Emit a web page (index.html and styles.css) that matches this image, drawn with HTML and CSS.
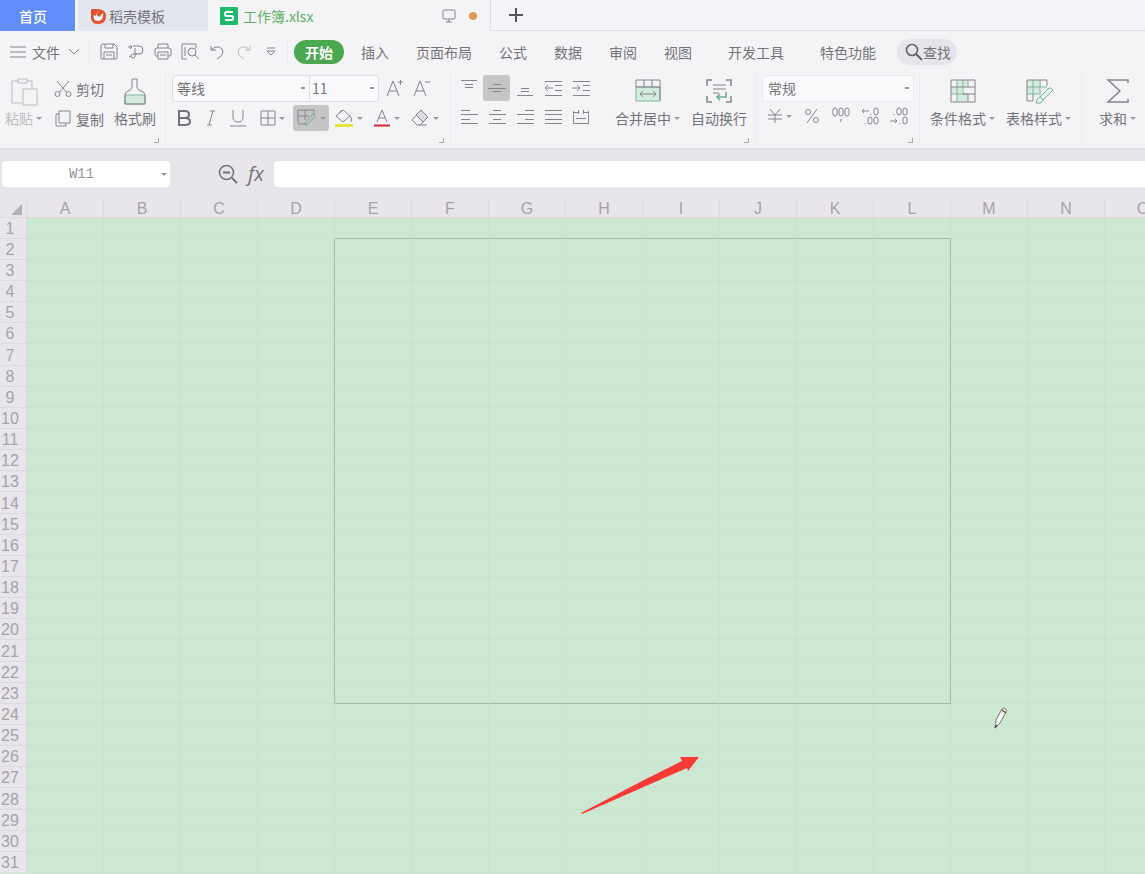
FILE: index.html
```html
<!DOCTYPE html>
<html lang="zh-CN">
<head>
<meta charset="utf-8">
<title>工作簿.xlsx</title>
<link rel="stylesheet" href="styles.css">
</head>
<body>
<nav class="tabs" aria-label="文档">
  <button class="tab tab-home">首页</button>
  <button class="tab tab-store">
    <svg width="16" height="18" viewBox="0 0 16 18"><path d="M1 2h6c6 0 9 3 9 7 0 5-3 8-8 8-5 0-7-3-7-7z" fill="#e5502e"/><path d="M8 3c1 2-1 3-1 5l2 2c2-1 2-3 4-4 1 4-1 8-5 8-4 0-5-3-4-6l2 1c0-2 2-3 2-6z" fill="#fff"/></svg>
    稻壳模板
  </button>
  <button class="tab tab-file">
    <svg width="18" height="18" viewBox="0 0 18 18"><rect width="18" height="18" rx="1" fill="#1cb96f"/><path d="M13 5H6.500Q5 5 5 7t1.500 2h5Q13 9 13 11t-1.500 2H5" fill="none" stroke="#fff" stroke-width="2"/></svg>
    <span class="file-name">工作簿.xlsx</span>
    <svg class="ic" width="14" height="14" viewBox="0 0 14 14"><rect x="1" y="1" width="12" height="9" rx="1"/><path d="M7 10v3M4 13h6"/></svg>
    <span class="dot"></span>
  </button>
  <div class="tab-rest"><button class="tab-add" aria-label="新建"><svg width="14" height="14" viewBox="0 0 14 14"><path d="M7 0v14M0 7h14" stroke="#56565a" stroke-width="2"/></svg></button></div>
</nav>

<div class="menu">
  <button class="file-menu"><svg class="ic" width="16" height="12" viewBox="0 0 16 12"><path d="M0 1h16M0 6h16M0 11h16"/></svg>文件<svg class="ic chev" width="12" height="8" viewBox="0 0 12 8"><path d="M1 1l5 5 5-5"/></svg></button>
  <div class="quick">
    <button aria-label="保存"><svg class="ic" width="18" height="18" viewBox="0 0 18 18"><path d="M1 3q0-2 2-2h11l3 3v11q0 1-1 1H2q-1 0-1-1zM4 16V9h10v7M5 1v4h8V1M6 12h6"/></svg></button>
    <button aria-label="输出"><svg class="ic" width="18" height="18" viewBox="0 0 18 18"><path d="M1 4h4M3 2l2 2-2 2M6 3h6a4 4 0 0 1 0 8H8M8 5v8a2 2 0 1 1-2-2h4M4 13l-2 1"/></svg></button>
    <button aria-label="打印"><svg class="ic" width="18" height="18" viewBox="0 0 18 18"><path d="M4 5V1h10v4M4 13H2q-1 0-1-1V7q0-2 2-2h12q2 0 2 2v5q0 1-1 1h-2M4 9h10v7H4zM6 12h6"/></svg></button>
    <button aria-label="打印预览"><svg class="ic" width="18" height="18" viewBox="0 0 18 18"><path d="M6 16H1V1h14v4M4 4v9"/><circle cx="11" cy="9" r="4"/><path d="M14 12l4 4"/></svg></button>
    <button aria-label="撤销"><svg class="ic" width="16" height="16" viewBox="0 0 16 16"><path d="M2 2v4h5M2 6q4-4 8-3 4 1 4 5 0 4-6 7"/></svg></button>
    <button aria-label="恢复"><svg class="ic pale" width="16" height="16" viewBox="0 0 16 16"><path d="M14 2v4H9M14 6q-4-4-8-3-4 1-4 5 0 4 6 7"/></svg></button>
    <button aria-label="更多"><svg class="ic" width="10" height="10" viewBox="0 0 10 10"><path d="M1 1h8M1 4h8L5 8z"/></svg></button>
  </div>
  <div class="menu-tabs">
    <button class="on">开始</button>
    <button>插入</button><button>页面布局</button><button>公式</button><button>数据</button><button>审阅</button><button>视图</button>
    <button class="wide">开发工具</button><button class="wide">特色功能</button>
  </div>
  <button class="find"><svg width="18" height="18" viewBox="0 0 18 18"><g fill="none" stroke="#626266" stroke-width="1.600"><circle cx="7" cy="7" r="5.500"/><path d="M11 11l6 6" stroke-width="2"/></g></svg>查找</button>
</div>

<div class="ribbon">
  <section class="group clip">
    <button class="big pale-text"><svg class="ic pale" width="28" height="30" viewBox="0 0 28 30"><path d="M8 4H2v22h10M17 4h5v7M8 2h9v4H8z"/><rect x="13" y="12" width="14" height="16"/></svg><span>粘贴<i class="caret"></i></span></button>
    <div class="stack">
      <button><svg class="ic" width="18" height="18" viewBox="0 0 18 18"><path d="M3 1l10 12M15 1L5 13"/><circle cx="3.500" cy="14" r="2.500"/><circle cx="14.500" cy="14" r="2.500"/></svg>剪切</button>
      <button><svg class="ic" width="18" height="18" viewBox="0 0 18 18"><path d="M5 1h11v12H5zM5 4H2v12h10v-3"/></svg>复制</button>
    </div>
    <button class="big"><svg class="ic" width="24" height="30" viewBox="0 0 24 30"><path d="M2 18h20v9H2z" fill="#d5ebdf" stroke="#82b59d"/><path d="M2 27v-9q0-3 3-4 4-1 4-4V2h5v8q0 3 4 4 4 1 4 4v9z"/></svg><span>格式刷</span></button>
    <i class="corner"></i>
  </section>

  <section class="group font">
    <div class="line combo">
      <select class="face" aria-label="字体"><option>等线</option></select><select class="size" aria-label="字号"><option>11</option></select>
      <button class="tool" aria-label="增大字号"><svg class="ic" width="18" height="18" viewBox="0 0 18 18"><path d="M1 17L7 2l6 15M3 12h8M12 3h5M14.500 1v5"/></svg></button>
      <button class="tool" aria-label="减小字号"><svg class="ic" width="18" height="18" viewBox="0 0 18 18"><path d="M1 17L7 2l6 15M3 12h8M12 3h5"/></svg></button>
    </div>
    <div class="line">
      <button class="tool" aria-label="加粗"><svg class="ic dark" width="14" height="16" viewBox="0 0 14 16"><path stroke-width="2" d="M2 1h6q4 0 4 3.500T8 8H2zM2 8h6q5 0 5 3.500T8 15H2z"/></svg></button>
      <button class="tool" aria-label="倾斜"><svg class="ic" width="12" height="16" viewBox="0 0 12 16"><path d="M5 1h5M2 15h5M8 1L4 15"/></svg></button>
      <button class="tool" aria-label="下划线"><svg class="ic" width="16" height="18" viewBox="0 0 16 18"><path d="M3 1v7q0 5 5 5t5-5V1M0 17h16"/></svg></button>
      <button class="tool drop border" aria-label="边框"><svg class="ic" width="16" height="16" viewBox="0 0 16 16"><path d="M1 1h14v14H1zM8 1v14M1 8h14"/></svg><i class="caret"></i></button>
      <button class="tool drop pressed" aria-label="绘图边框"><svg class="ic" width="20" height="18" viewBox="0 0 20 18"><path d="M9 15H3q-2 0-2-2V1h16v5M1 7h11M8 1v10"/><path d="M18 7l-7 8-3 1 1-3 7-8z" stroke="#76a98a"/></svg><i class="caret"></i></button>
      <button class="tool drop" aria-label="填充颜色"><svg class="ic" width="20" height="18" viewBox="0 0 20 18"><path d="M9 1l7 6-7 6-7-6zM5 4l3-3M16 7q3 3 1 6"/><path d="M1 16.500h18" stroke="#e4e43a" stroke-width="3"/></svg><i class="caret"></i></button>
      <button class="tool drop" aria-label="字体颜色"><svg class="ic" width="18" height="18" viewBox="0 0 18 18"><path d="M4 13L9 1l5 12M6 9h6"/><path d="M1 16.500h16" stroke="#d3283f" stroke-width="2"/></svg><i class="caret"></i></button>
      <button class="tool drop" aria-label="清除"><svg class="ic" width="20" height="18" viewBox="0 0 20 18"><path d="M11 1l7 7-8 8H7l-5-5z"/><path d="M11 1l7 7-5 5-7-7z" fill="#dcdcdf"/><path d="M9 16h8"/></svg><i class="caret"></i></button>
    </div>
    <i class="corner"></i>
  </section>

  <section class="group align">
    <div>
      <div class="line">
        <button class="tool" aria-label="顶端对齐"><svg class="ic" width="16" height="16" viewBox="0 0 16 16"><path d="M0 .5h16M4 4.500h8M4 7.500h8"/></svg></button>
        <button class="tool pressed" aria-label="垂直居中"><svg class="ic" width="18" height="16" viewBox="0 0 18 16"><path d="M5 4.500h8M0 8.500h18M5 11.500h8"/></svg></button>
        <button class="tool" aria-label="底端对齐"><svg class="ic" width="16" height="16" viewBox="0 0 16 16"><path d="M4 8.500h8M4 11.500h8M0 15.500h16"/></svg></button>
        <button class="tool" aria-label="减少缩进"><svg class="ic" width="18" height="16" viewBox="0 0 18 16"><path d="M1 1.500h17M11 5.500h7M11 10.500h7M1 15.500h17M9 8H1M4 5L1 8l3 3"/></svg></button>
        <button class="tool" aria-label="增加缩进"><svg class="ic" width="18" height="16" viewBox="0 0 18 16"><path d="M1 1.500h17M11 5.500h7M11 10.500h7M1 15.500h17M0 8h8M5 5l3 3-3 3"/></svg></button>
      </div>
      <div class="line">
        <button class="tool" aria-label="左对齐"><svg class="ic" width="18" height="16" viewBox="0 0 18 16"><path d="M1 1.500h9M1 5.500h17M1 10.500h9M1 14.500h17"/></svg></button>
        <button class="tool" aria-label="居中"><svg class="ic" width="18" height="16" viewBox="0 0 18 16"><path d="M5 1.500h8M1 5.500h17M5 10.500h8M1 14.500h17"/></svg></button>
        <button class="tool" aria-label="右对齐"><svg class="ic" width="18" height="16" viewBox="0 0 18 16"><path d="M9 1.500h9M1 5.500h17M9 10.500h9M1 14.500h17"/></svg></button>
        <button class="tool" aria-label="两端对齐"><svg class="ic" width="18" height="16" viewBox="0 0 18 16"><path d="M1 1.500h17M1 5.500h17M1 10.500h17M1 14.500h17"/></svg></button>
        <button class="tool" aria-label="分散对齐"><svg class="ic" width="18" height="16" viewBox="0 0 18 16"><path d="M1.500 5.500V2M16.500 5.500V2M1 3.500h5M12 3.500h5M6.500 1v4M11.500 1v4M1.500 6v8.500h15V6M4 9.500h10"/></svg></button>
      </div>
    </div>
    <button class="big merge"><svg class="ic" width="28" height="30" viewBox="0 0 28 30"><path d="M2 10h24v14H2z" fill="#d5ebdf" stroke="#82b59d"/><path d="M2 10V3h24v7M10 3v7M18 3v7M2 10h24v14"/><path d="M6 17h16M9 14l-3 3 3 3M19 14l3 3-3 3"/></svg><span>合并居中<i class="caret"></i></span></button>
    <button class="big"><svg class="ic" width="28" height="30" viewBox="0 0 28 30"><path stroke-width="1.500" d="M2 9V3h5M21 3h5v6M2 19v6h5M21 25h5v-6"/><path d="M8 8h13M8 12h13M8 16h6"/><path d="M21 15v5H12M15 17l-3 3 3 3" stroke="#6da98a" stroke-width="1.500"/></svg><span>自动换行</span></button>
    <i class="corner"></i>
  </section>

  <section class="group number">
    <div class="line"><select class="format" aria-label="数字格式"><option>常规</option></select></div>
    <div class="line">
      <button class="tool drop" aria-label="货币"><svg class="ic" width="16" height="16" viewBox="0 0 16 16"><path d="M3 1l5 6 5-6M8 7v8M1 7h14M1 11h14"/></svg><i class="caret"></i></button>
      <button class="tool" aria-label="百分比"><svg class="ic" width="16" height="16" viewBox="0 0 16 16"><circle cx="4" cy="4" r="2.500"/><circle cx="12" cy="12" r="2.500"/><path d="M13 1L3 15"/></svg></button>
      <button class="tool" aria-label="千位分隔"><svg class="ic" width="20" height="18" viewBox="0 0 20 18"><rect x="2" y="1" width="4" height="8" rx="2"/><rect x="8" y="1" width="4" height="8" rx="2"/><rect x="14" y="1" width="4" height="8" rx="2"/><path d="M10 12v2l-1 1"/></svg></button>
      <button class="tool" aria-label="增加小数位"><svg class="ic" width="20" height="18" viewBox="0 0 20 18"><path d="M9 4H2M4 2L2 4l2 2M11 7v1M5 16v1"/><rect x="14" y="1" width="4" height="7" rx="2"/><rect x="14" y="10" width="4" height="7" rx="2"/><rect x="8" y="10" width="4" height="7" rx="2"/></svg></button>
      <button class="tool" aria-label="减少小数位"><svg class="ic" width="20" height="18" viewBox="0 0 20 18"><path d="M1 14h7M6 12l2 2-2 2M5 7v1M11 16v1"/><rect x="8" y="1" width="4" height="7" rx="2"/><rect x="14" y="1" width="4" height="7" rx="2"/><rect x="14" y="10" width="4" height="7" rx="2"/></svg></button>
    </div>
    <i class="corner"></i>
  </section>

  <section class="group styles">
    <button class="big"><svg class="ic" width="28" height="30" viewBox="0 0 28 30"><path d="M8 3h11v7H8zM2 10h11v7H2zM8 17h11v8H8z" fill="#d5ebdf" stroke="none"/><path d="M8 3v22M14 3v14M19 3v7M2 17h17" stroke="#82b59d"/><path d="M2 3h24v22H2zM2 10h24M14 17h12M19 17v8"/></svg><span>条件格式<i class="caret"></i></span></button>
    <button class="big"><svg class="ic" width="28" height="30" viewBox="0 0 28 30"><path d="M2 3h14v14H2z" fill="#d5ebdf" stroke="none"/><path d="M2 10h20M2 17h14M8 3v14M15 3v13" stroke="#82b59d"/><path d="M8 17v7H2V3h20v6"/><path d="M26 11l2 2-10 10-3-3 9-9zM15 20q-3 0-4 6 6 1 7-3" fill="#e6f2ec" stroke="#79b294"/></svg><span>表格样式<i class="caret"></i></span></button>
  </section>

  <section class="group sum">
    <button class="big"><svg class="ic" width="24" height="30" viewBox="0 0 24 30"><path stroke-width="1.500" d="M22 6V3H2l12 11L2 25h20v-3"/></svg><span>求和<i class="caret"></i></span></button>
  </section>
</div>

<div class="formula">
  <div class="name"><input aria-label="名称框" value="W11"><i class="caret"></i></div>
  <button aria-label="缩小"><svg class="ic dark" width="20" height="20" viewBox="0 0 20 20"><circle cx="8.500" cy="8.500" r="7"/><path d="M14 14l5 5M5 8.500h7" stroke-width="2"/></svg></button>
  <button class="fx">fx</button>
  <input class="entry" aria-label="编辑栏">
</div>

<main class="sheet">
  <table>
    <thead><tr><th class="all"><svg width="12" height="12" viewBox="0 0 12 12"><path d="M12 1v11H1z" fill="#b2b1b5"/></svg></th></tr></thead>
    <tbody></tbody>
  </table>
  <svg class="arrow" width="120" height="60" viewBox="0 0 120 60"><path d="M0 57L63 24 101 5 99 1h19l-11 14-1-3L1 58z" fill="#fb3a36"/></svg>
  <svg class="pen" width="14" height="22" viewBox="0 0 14 22"><path d="M1 21l1-8L8 2q2-2 4 0 1 1 0 3L6 16z" fill="#f3f5f3" stroke="#777" stroke-width="1"/><path d="M8 3l4 3M1 21l2-3" stroke="#555" stroke-width="1.500"/></svg>
</main>
<script src="script.js"></script>
</body>
</html>
```

FILE: styles.css
```css
* { box-sizing: border-box; }
body {
  margin: 0;
  height: 100vh;
  display: flex;
  flex-direction: column;
  overflow: hidden;
  background: #f4f4f7;
  color: #747377;
  font: 14px/20px "Noto Sans CJK SC", sans-serif;
}
button, select, input { font: inherit; color: inherit; border: 0; margin: 0; padding: 0; background: none; }
button { display: flex; align-items: center; white-space: nowrap; }
svg { flex: none; display: block; }
.ic { fill: none; stroke: #858489; stroke-width: 1; }
.ic.pale { stroke: #bcbcc0; }
.ic.dark { stroke: #727277; stroke-width: 1.5; }
.caret {
  flex: none;
  display: inline-block;
  border: 3px solid transparent;
  border-top-color: #99989c;
  border-bottom: 0;
}

.tabs { display: flex; height: 31px; flex: none; }
.tab-home { width: 75px; padding-left: 19px; background: #5f8efb; color: #fff; font-weight: 500; margin-right: 3px; }
.tab-store { width: 130px; padding-left: 12px; gap: 3px; background: #e3e5ef; margin-right: 2px; }
.tab-file { width: 280px; padding: 0 13px 0 10px; gap: 5px; color: #5faf64; }
.file-name { flex: 1; text-align: left; }
.dot { width: 8px; height: 8px; border-radius: 50%; background: #e29a5c; margin-left: 8px; }
.tab-rest { flex: 1; display: flex; border-left: 1px solid #dcddea; border-bottom: 1px solid #dcddea; background: #f3f3f9; }
.tab-add { padding-left: 18px; }

.menu { display: flex; align-items: center; height: 42px; flex: none; }
.file-menu { width: 90px; height: 24px; padding-left: 10px; gap: 6px; border-right: 1px solid #e8e8ed; }
.chev { margin-left: 2px; }
.quick { display: flex; width: 198px; height: 24px; padding-left: 5px; border-right: 1px solid #e8e8ed; }
.quick button { width: 27px; justify-content: center; }
.menu-tabs { display: flex; align-items: center; gap: 27px; padding-left: 6px; }
.menu-tabs .on { background: #4aa850; color: #fff; font-weight: 700; border-radius: 12px; height: 24px; padding: 0 11px; margin-right: -10px; }
.menu-tabs .wide { margin-left: 9px; }
.find { margin-left: 21px; height: 26px; padding: 0 6px 0 8px; border-radius: 13px; background: #e6e6ea; }

.ribbon { display: flex; height: 76px; flex: none; border-bottom: 1px solid #dfdee2; }
.group { position: relative; flex: none; height: 70px; border-right: 1px solid #ececf0; }
.corner { position: absolute; right: 6px; bottom: 0; width: 5px; height: 5px; border: solid #aaa9ad; border-width: 0 1px 1px 0; }
.big { flex-direction: column; line-height: 20px; padding-top: 4px; gap: 1px; height: 58px; }
.big span { display: flex; align-items: center; gap: 3px; }
.line { display: flex; align-items: center; height: 28px; }
.tool { width: 27px; height: 26px; justify-content: center; flex: none; }
.drop { width: 36px; gap: 3px; }
.pressed { background: #c5c5c7; border-radius: 3px; }
.pale-text { color: #bdbcc0; }

.clip { width: 166px; display: flex; padding-left: 5px; }
.clip .stack { margin: 1px 10px 0 12px; }
.clip .stack button { height: 30px; gap: 4px; }
.font { width: 285px; padding: 1px 0 0 4px; }
.font .drop { width: 38px; }
.font .drop.border { width: 42px; }
.font .drop.pressed { width: 36px; }
.combo { margin: 0 0 2px 2px; }
select {
  appearance: none;
  height: 27px;
  padding-left: 4px;
  border: 1px solid #dedee2;
  background: #fafafc linear-gradient(#99989c, #99989c) no-repeat right 4px center / 4px 2px;
}
.face { width: 138px; border-radius: 4px 0 0 4px; }
.size { width: 69px; padding-left: 2px; margin-right: 2px; border-left: 0; border-radius: 0 4px 4px 0; }
.align { width: 305px; display: flex; padding: 0 0 0 4px; }
.align .line { padding-top: 1px; height: 29px; gap: 1px; }
.merge { margin: 0 11px 0 21px; }
.number { width: 164px; padding: 1px 5px 0 6px; }
.format { width: 100%; border-color: #e9e9ed; border-radius: 4px; padding-left: 5px; }
.number .line + .line { gap: 2px; }
.number .drop { width: 34px; }
.styles { width: 162px; display: flex; gap: 11px; padding-left: 10px; }
.sum { padding-left: 17px; border: 0; }

.formula { display: flex; align-items: center; height: 50px; flex: none; background: #e8e6ea; padding-left: 2px; }
.name { display: flex; align-items: center; width: 168px; height: 26px; padding-right: 3px; margin-right: 48px; background: #fff; border-radius: 4px; }
.name input { flex: 1; min-width: 0; text-align: center; font-family: "Liberation Mono", monospace; color: #96959a; }
.fx { font: italic 20px/24px "Open Sans", sans-serif; margin: 0 10px; }
.entry { flex: 1; height: 26px; padding: 0 8px; background: #fff; border-radius: 4px 0 0 4px; }

.sheet { position: relative; flex: 1; overflow: hidden; background: #cce8d0; }
table { table-layout: fixed; width: 1182px; border-collapse: separate; border-spacing: 0; }
th { width: 77px; height: 19px; padding: 1px 0 0; font: 16px/16px "Liberation Sans", sans-serif; color: #a4a3a7; background: #e8e6ea; border: solid #dcdade; border-width: 0 1px 1px 0; }
tbody th, th.all { width: 27px; }
th.all svg { margin-left: 10px; }
tbody th { height: 21px; line-height: 18px; padding: 2px 6px 0 0; }
tbody tr:nth-child(7n) th { height: 22px; }
td { padding: 0; border: solid #c9e2ce; border-width: 0 1px 1px 0; }
.edge-top, .edge-bottom { border-bottom-color: #a3baa8; }
.edge-left, .edge-right { border-right-color: #a3baa8; }
.arrow { position: absolute; left: 581px; top: 557px; }
.pen { position: absolute; left: 994px; top: 508px; }
```

FILE: script.js
```js
const columns = 'ABCDEFGHIJKLMNO';
const head = document.querySelector('thead tr');
const body = document.querySelector('tbody');

for (const letter of columns) {
  const th = document.createElement('th');
  th.scope = 'col';
  th.textContent = letter;
  head.append(th);
}

// Drawn border encloses E2:L23; cells only own their right and bottom edges.
for (let r = 1; r <= 31; r++) {
  const tr = document.createElement('tr');
  const th = document.createElement('th');
  th.scope = 'row';
  th.textContent = r;
  tr.append(th);
  for (const c of columns) {
    const td = document.createElement('td');
    const inCols = c >= 'E' && c <= 'L';
    const inRows = r >= 2 && r <= 23;
    if (inCols && r === 1) td.classList.add('edge-top');
    if (inCols && r === 23) td.classList.add('edge-bottom');
    if (inRows && c === 'D') td.classList.add('edge-left');
    if (inRows && c === 'L') td.classList.add('edge-right');
    tr.append(td);
  }
  body.append(tr);
}
```
